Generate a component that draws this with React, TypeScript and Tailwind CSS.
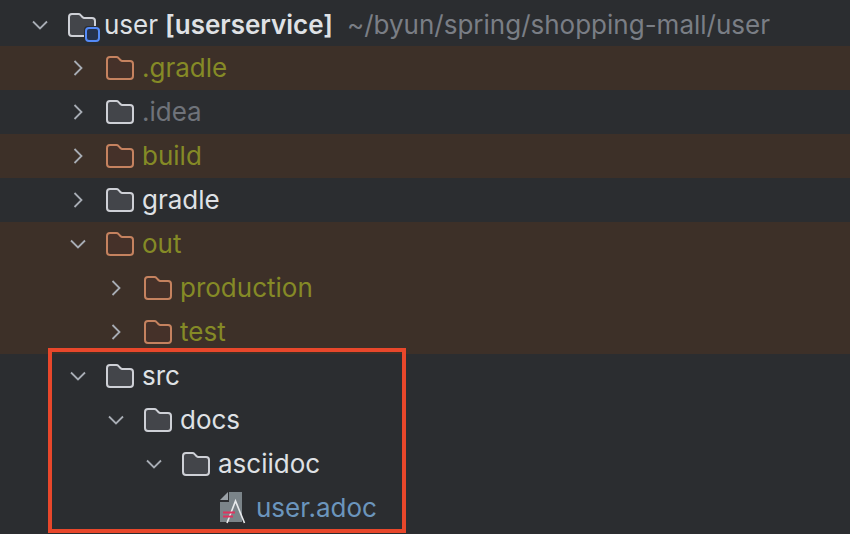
import React from "react";

type Tone = "plain" | "excluded" | "dim";

function Folder({ excluded }: { excluded?: boolean }) {
  const stroke = excluded ? "#c5825f" : "#ced0d6";
  const fill = excluded ? "#453129" : "#43454a";
  return (
    <svg width="28" height="24" viewBox="0 0 28 24" className="shrink-0">
      <path
        d="M4 1H10.5C11.3 1 11.9 1.3 12.4 1.9L14.6 4.2C15 4.7 15.6 5 16.3 5H24C25.7 5 27 6.3 27 8V20C27 21.7 25.7 23 24 23H4C2.3 23 1 21.7 1 20V4C1 2.3 2.3 1 4 1Z"
        fill={fill}
        stroke={stroke}
        strokeWidth="2"
        strokeLinejoin="round"
      />
    </svg>
  );
}

function ModuleFolder() {
  return (
    <div className="relative w-[28px] h-[24px] shrink-0">
      <Folder />
      <svg width="16" height="16" viewBox="0 0 16 16" className="absolute left-[16px] top-[13px]">
        <rect x="0" y="0" width="16" height="16" rx="4" fill="#2b2d30" />
        <rect x="2" y="2" width="13" height="13" rx="3" fill="#25324d" stroke="#548af7" strokeWidth="2" />
      </svg>
    </div>
  );
}

function Chevron({ open }: { open?: boolean }) {
  return (
    <svg width="20" height="20" viewBox="0 0 20 20" className="shrink-0">
      <path
        d={open ? "M3 6.5L10 13.5L17 6.5" : "M6.5 3L13.5 10L6.5 17"}
        fill="none"
        stroke="#a8adb5"
        strokeWidth="1.8"
      />
    </svg>
  );
}

function AdocIcon() {
  return (
    <svg width="28" height="32" viewBox="0 0 28 32" className="shrink-0">
      <path d="M0 8L8 0V8Z" fill="#9aa0a6" />
      <path d="M0 10H9V0H22V30H0Z" fill="#7b8489" />
      <path d="M7 31L15.5 9L24.5 31" fill="none" stroke="#e8eaec" strokeWidth="1.6" />
      <path d="M3 20.5H15M3 24.5H13" stroke="#e0335f" strokeWidth="2" />
    </svg>
  );
}

function Row({
  level,
  open,
  name,
  tone = "plain",
  leaf,
}: {
  level: number;
  open?: boolean;
  name: string;
  tone?: Tone;
  leaf?: boolean;
}) {
  const pad = ["pl-[30px]", "pl-[68px]", "pl-[106px]", "pl-[144px]", "pl-[182px]"][level];
  const color =
    tone === "excluded" ? "text-[#858a26]" : tone === "dim" ? "text-[#6f737a]" : "text-[#dfe1e5]";
  return (
    <div className={`flex items-center h-[44px] ${pad} ${tone === "excluded" ? "bg-[#3d3028]" : ""}`}>
      {leaf ? (
        <div className="w-[20px] shrink-0" />
      ) : (
        <Chevron open={open} />
      )}
      {leaf ? (
        <div className="ml-[18px] w-[28px] flex justify-center">
          <AdocIcon />
        </div>
      ) : (
        <div className="ml-[18px]">
          <Folder excluded={tone === "excluded"} />
        </div>
      )}
      <span className={`ml-[8px] ${leaf ? "text-[#6b95bd]" : color}`}>{name}</span>
    </div>
  );
}

export default function App() {
  return (
    <div
      className="relative w-[850px] h-[534px] overflow-hidden bg-[#2b2d30] pt-[3px] text-[26px] leading-[44px] whitespace-nowrap"
      style={{ fontFamily: "Inter, sans-serif" }}
    >
      <div className="flex items-center h-[43px] pl-[30px]">
        <Chevron open />
        <div className="ml-[18px]">
          <ModuleFolder />
        </div>
        <span className="ml-[8px] text-[#dfe1e5]">user</span>
        <span className="ml-[7px] text-[#dfe1e5] font-semibold">[userservice]</span>
        <span className="ml-[14px] text-[#7a7e85]">~/byun/spring/shopping-mall/user</span>
      </div>
      <Row level={1} name=".gradle" tone="excluded" />
      <Row level={1} name=".idea" tone="dim" />
      <Row level={1} name="build" tone="excluded" />
      <Row level={1} name="gradle" />
      <Row level={1} name="out" tone="excluded" open />
      <Row level={2} name="production" tone="excluded" />
      <Row level={2} name="test" tone="excluded" />
      <Row level={1} name="src" open />
      <Row level={2} name="docs" open />
      <Row level={3} name="asciidoc" open />
      <Row level={4} name="user.adoc" leaf />
      <div className="absolute left-[48px] top-[348px] w-[358px] h-[185px] border-[4px] border-[#e8472b]" />
    </div>
  );
}
